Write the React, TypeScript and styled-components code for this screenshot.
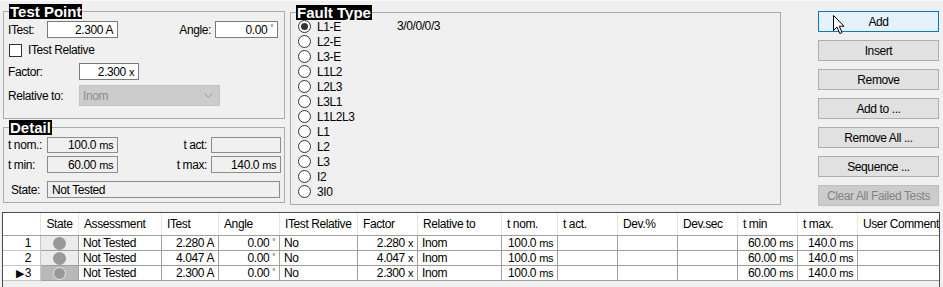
import React from "react";
import styled, { createGlobalStyle } from "styled-components";

const GlobalStyle = createGlobalStyle`
  html, body {
    margin: 0;
    padding: 0;
    background: #f0f0f0;
  }
  body {
    font-family: "Liberation Sans", Arial, sans-serif;
    font-size: 12px;
    letter-spacing: -0.4px;
    color: #000;
  }
`;

const Page = styled.div`
  width: 943px;
  height: 287px;
  overflow: hidden;
  background: #f0f0f0;
  border-top: 1px solid #fafafa;
  box-sizing: border-box;
`;

const TopArea = styled.div`
  display: flex;
  padding: 3px 0 0 3px;
  height: 207px;
  box-sizing: border-box;
`;

const LeftColumn = styled.div`
  display: flex;
  flex-direction: column;
  gap: 1px;
  width: 282px;
`;

const Group = styled.fieldset<{ $h: number; $w?: number }>`
  margin: 0;
  padding: 0 4px;
  border: 1px solid #ababab;
  height: ${({ $h }) => $h}px;
  width: ${({ $w }) => ($w ? `${$w}px` : "auto")};
  box-sizing: border-box;
  min-width: 0;
`;

const Legend = styled.legend`
  background: #000;
  color: #fff;
  font-weight: bold;
  font-size: 15px;
  line-height: 15px;
  letter-spacing: 0;
  padding: 0 1px;
  margin-left: 1px;
`;

const Row = styled.div<{ $mt: number; $h: number }>`
  display: flex;
  align-items: center;
  margin-top: ${({ $mt }) => $mt}px;
  height: ${({ $h }) => $h}px;
`;

const Label = styled.span<{ $w: number; $right?: boolean }>`
  width: ${({ $w }) => $w}px;
  flex: none;
  text-align: ${({ $right }) => ($right ? "right" : "left")};
  padding-right: ${({ $right }) => ($right ? 4 : 0)}px;
  box-sizing: border-box;
  white-space: nowrap;
`;

const Input = styled.div<{ $w: number; $h?: number; $ro?: boolean; $left?: boolean }>`
  width: ${({ $w }) => $w}px;
  height: ${({ $h }) => $h ?? 17}px;
  flex: none;
  box-sizing: border-box;
  border: 1px solid ${({ $ro }) => ($ro ? "#8c8c8c" : "#7a7a7a")};
  background: ${({ $ro }) => ($ro ? "#f0f0f0" : "#fff")};
  display: flex;
  align-items: center;
  justify-content: ${({ $left }) => ($left ? "flex-start" : "flex-end")};
  padding: 0 4px;
  white-space: nowrap;
`;

const Deg = styled.span`
  font-size: 8px;
  align-self: flex-start;
  margin-left: 3px;
  margin-top: 1px;
`;

const Unit = styled.span`
  font-size: 11px;
  margin-left: 3px;
`;

const Checkbox = styled.span`
  width: 13px;
  height: 13px;
  box-sizing: border-box;
  border: 1px solid #333;
  background: #fff;
  margin: 0 6px 0 1px;
  flex: none;
`;

const Select = styled.div`
  width: 141px;
  height: 21px;
  flex: none;
  box-sizing: border-box;
  background: #cccccc;
  border: 1px solid #c4c4c4;
  color: #8d8d8d;
  display: flex;
  align-items: center;
  justify-content: space-between;
  padding: 0 6px 0 3px;
`;

const FaultBody = styled.div`
  display: flex;
  margin-top: -1px;
`;

const RadioList = styled.div`
  display: flex;
  flex-direction: column;
  width: 99px;
  padding-left: 3px;
`;

const RadioRow = styled.div`
  display: flex;
  align-items: center;
  height: 15px;
`;

const Radio = styled.span<{ $on?: boolean }>`
  width: 13px;
  height: 13px;
  box-sizing: border-box;
  border: 1px solid #333;
  border-radius: 50%;
  background: #fff;
  margin-right: 6px;
  display: flex;
  align-items: center;
  justify-content: center;
  &::after {
    content: "";
    display: ${({ $on }) => ($on ? "block" : "none")};
    width: 7px;
    height: 7px;
    border-radius: 50%;
    background: #333;
  }
`;

const Code = styled.div`
  line-height: 15px;
`;

const Buttons = styled.div`
  display: flex;
  flex-direction: column;
  gap: 8px;
  width: 121px;
  margin: 7px 0 0 37px;
`;

const Button = styled.div<{ $hot?: boolean; $off?: boolean }>`
  position: relative;
  height: 21px;
  box-sizing: border-box;
  border: 1px solid ${({ $hot, $off }) => ($hot ? "#0078d7" : $off ? "#bfbfbf" : "#adadad")};
  background: ${({ $hot, $off }) => ($hot ? "#e5f1fb" : $off ? "#cccccc" : "#e1e1e1")};
  color: ${({ $off }) => ($off ? "#838383" : "#000")};
  display: flex;
  align-items: center;
  justify-content: center;
  white-space: nowrap;
`;

const Cursor = styled.svg`
  position: absolute;
  left: 14px;
  top: 3px;
`;

const Table = styled.div`
  margin: 4px 3px 0 2px;
  border: 1px solid #4a4a4a;
  border-bottom: none;
  height: 80px;
  box-sizing: border-box;
  background: #f0f0f0;
`;

const cols = "38px 38px 83px 57px 61px 78px 60px 84px 56px 60px 60px 60px 60px 60px 81px";

const HeadRow = styled.div`
  display: grid;
  grid-template-columns: ${cols};
  height: 22px;
  background: #fff;
  border-bottom: 1px solid #a0a0a0;
`;

const HeadCell = styled.div<{ $center?: boolean }>`
  display: flex;
  align-items: center;
  justify-content: ${({ $center }) => ($center ? "center" : "flex-start")};
  padding-left: ${({ $center }) => ($center ? 0 : 5)}px;
  border-right: 1px solid #e5e5e5;
  white-space: nowrap;
  overflow: hidden;
  &:last-child {
    border-right: none;
  }
`;

const DataRow = styled.div`
  display: grid;
  grid-template-columns: ${cols};
  height: 15px;
`;

const Cell = styled.div<{ $align?: "left" | "right" | "center"; $bg?: string }>`
  display: flex;
  align-items: center;
  justify-content: ${({ $align }) =>
    $align === "right" ? "flex-end" : $align === "center" ? "center" : "flex-start"};
  padding: 0 4px;
  background: ${({ $bg }) => $bg ?? "#fff"};
  border-right: 1px solid #a0a0a0;
  border-bottom: 1px solid #a0a0a0;
  white-space: nowrap;
  overflow: hidden;
  &:last-child {
    border-right: none;
  }
`;

const RowHead = styled(Cell)`
  border-right-color: #c8c8c8;
  border-bottom-color: #c8c8c8;
  padding-right: 9px;
`;

const StateDot = styled.span<{ $sel?: boolean }>`
  width: 13px;
  height: 13px;
  border-radius: 50%;
  background: #999;
  box-sizing: border-box;
  border: ${({ $sel }) => ($sel ? "1px solid #e6e6e6" : "none")};
`;

const Arrow = styled.span`
  font-size: 11px;
  margin-right: 1px;
`;

const faults = ["L1-E", "L2-E", "L3-E", "L1L2", "L2L3", "L3L1", "L1L2L3", "L1", "L2", "L3", "I2", "3I0"];
const buttons = ["Add", "Insert", "Remove", "Add to ...", "Remove All ...", "Sequence ...", "Clear All Failed Tests"];
const headers = [
  "", "State", "Assessment", "ITest", "Angle", "ITest Relative", "Factor", "Relative to",
  "t nom.", "t act.", "Dev.%", "Dev.sec", "t min", "t max.", "User Comment",
];
const rows = [
  { n: "1", itest: "2.280", factor: "2.280" },
  { n: "2", itest: "4.047", factor: "4.047" },
  { n: "3", itest: "2.300", factor: "2.300", sel: true },
];

const App = () => {
  return (
    <Page>
      <GlobalStyle />
      <TopArea>
        <LeftColumn>
          <Group $h={115}>
            <Legend>Test Point</Legend>
            <Row $mt={2} $h={17}>
              <Label $w={39}>ITest:</Label>
              <Input $w={71}>2.300 A</Input>
              <Label $w={97} $right>Angle:</Label>
              <Input $w={63}>
                0.00<Deg>°</Deg>
              </Input>
            </Row>
            <Row $mt={5} $h={14}>
              <Checkbox />
              <span>ITest Relative</span>
            </Row>
            <Row $mt={6} $h={17}>
              <Label $w={71}>Factor:</Label>
              <Input $w={60}>
                2.300<Unit>x</Unit>
              </Input>
            </Row>
            <Row $mt={5} $h={21}>
              <Label $w={71}>Relative to:</Label>
              <Select>
                <span>Inom</span>
                <svg width="9" height="5" viewBox="0 0 9 5">
                  <path d="M0.5 0.5 L4.5 4.5 L8.5 0.5" fill="none" stroke="#9a9a9a" strokeWidth="1" />
                </svg>
              </Select>
            </Row>
          </Group>
          <Group $h={83}>
            <Legend>Detail</Legend>
            <Row $mt={2} $h={16}>
              <Label $w={39}>t nom.:</Label>
              <Input $w={71} $h={16} $ro>
                100.0<Unit>ms</Unit>
              </Input>
              <Label $w={93} $right>t act:</Label>
              <Input $w={70} $h={16} $ro />
            </Row>
            <Row $mt={3} $h={17}>
              <Label $w={39}>t min:</Label>
              <Input $w={71} $ro>
                60.00<Unit>ms</Unit>
              </Input>
              <Label $w={93} $right>t max:</Label>
              <Input $w={70} $ro>
                140.0<Unit>ms</Unit>
              </Input>
            </Row>
            <Row $mt={8} $h={17}>
              <Label $w={39}>&nbsp;State:</Label>
              <Input $w={233} $ro $left>
                Not Tested
              </Input>
            </Row>
          </Group>
        </LeftColumn>
        <Group $h={200} $w={491} style={{ marginLeft: 5, marginTop: 1 }}>
          <Legend>Fault Type</Legend>
          <FaultBody>
            <RadioList>
              {faults.map((f, i) => (
                <RadioRow key={f}>
                  <Radio $on={i === 0} />
                  {f}
                </RadioRow>
              ))}
            </RadioList>
            <Code>3/0/0/0/3</Code>
          </FaultBody>
        </Group>
        <Buttons>
          {buttons.map((b, i) => (
            <Button key={b} $hot={i === 0} $off={i === buttons.length - 1}>
              {b}
              {i === 0 && (
                <Cursor width="13" height="20" viewBox="0 0 13 20">
                  <path
                    d="M0.5 0.5 L0.5 15.5 L4 12 L6.8 18.5 L9 17.6 L6.3 11.2 L11 11.2 Z"
                    fill="#fff"
                    stroke="#000"
                    strokeWidth="1"
                    strokeLinejoin="round"
                  />
                </Cursor>
              )}
            </Button>
          ))}
        </Buttons>
      </TopArea>
      <Table>
        <HeadRow>
          {headers.map((h, i) => (
            <HeadCell key={i} $center={i === 1}>
              {h}
            </HeadCell>
          ))}
        </HeadRow>
        {rows.map((r) => (
          <DataRow key={r.n}>
            <RowHead $align="right">
              {r.sel && <Arrow>▶</Arrow>}
              {r.n}
            </RowHead>
            <Cell $align="center" $bg={r.sel ? "#b9b9b9" : "#ececec"}>
              <StateDot $sel={r.sel} />
            </Cell>
            <Cell>Not Tested</Cell>
            <Cell $align="right">{r.itest} A</Cell>
            <Cell $align="right">
              0.00<Deg>°</Deg>
            </Cell>
            <Cell>No</Cell>
            <Cell $align="right">
              {r.factor}<Unit>x</Unit>
            </Cell>
            <Cell>Inom</Cell>
            <Cell $align="right">
              100.0<Unit>ms</Unit>
            </Cell>
            <Cell />
            <Cell />
            <Cell />
            <Cell $align="right">
              60.00<Unit>ms</Unit>
            </Cell>
            <Cell $align="right">
              140.0<Unit>ms</Unit>
            </Cell>
            <Cell />
          </DataRow>
        ))}
      </Table>
    </Page>
  );
};

export default App;
